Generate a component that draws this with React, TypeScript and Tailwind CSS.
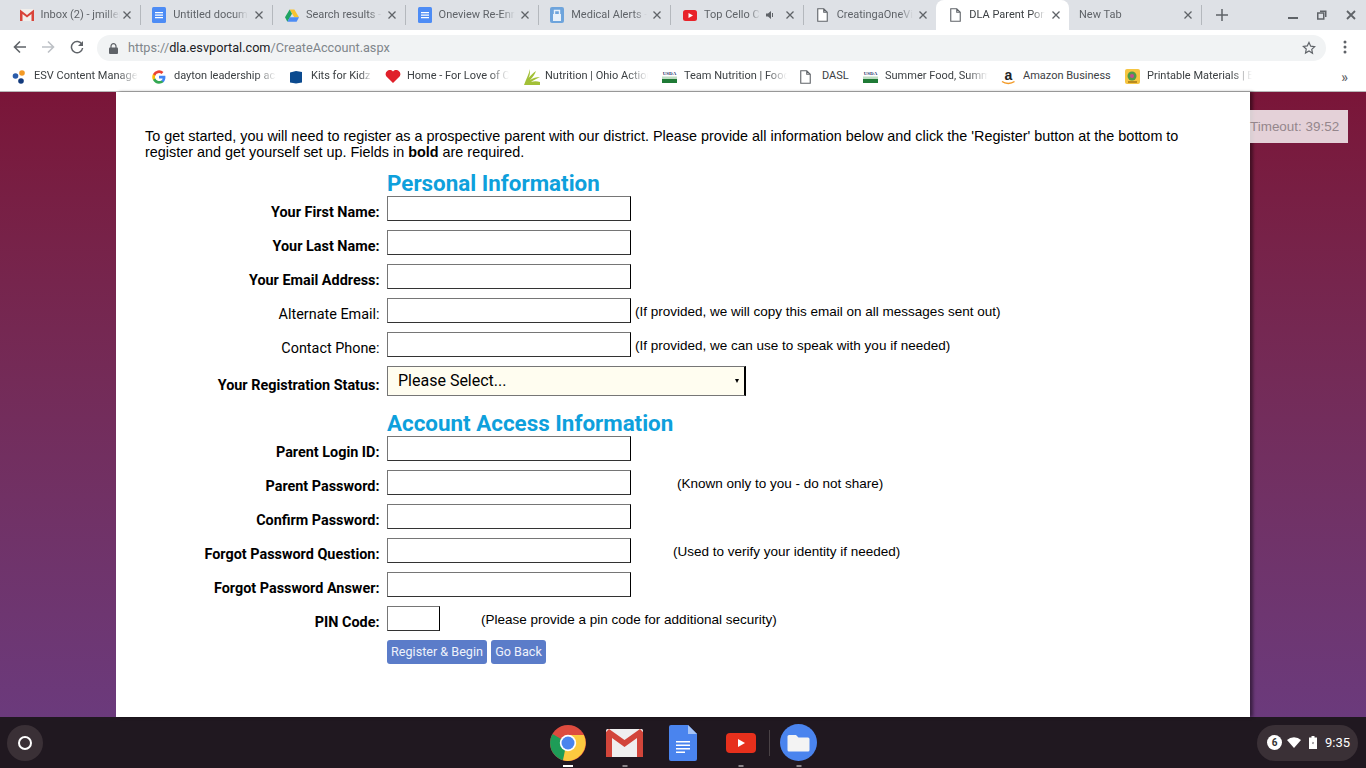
import React from "react";

const GmailTab = () => (
  <svg width="14" height="12" viewBox="0 0 14 12"><rect width="14" height="12" fill="#f1efec" /><path d="M0 .5 7 6l7-5.500V12h-2.500V5L7 8.500 2.500 5v7H0z" fill="#d9443a" /></svg>
);
const DocsIcon = () => (
  <svg width="14" height="16" viewBox="0 0 14 16"><rect width="14" height="16" rx="1.500" fill="#4d8cf5" /><path d="M3 5h8v1.300H3zM3 7.500h8v1.300H3zM3 10h8v1.300H3z" fill="#fff" /></svg>
);
const DriveIcon = () => (
  <svg width="14" height="13" viewBox="0 0 16 14"><path d="M5.300 0h5.400l5.300 9h-5.400z" fill="#f7c331" /><path d="M5.300 0 0 9l2.700 5L8 5z" fill="#1fa463" /><path d="M2.700 14h10.600L16 9H5.400z" fill="#4d8cf5" /></svg>
);
const BagIcon = () => (
  <svg width="14" height="16" viewBox="0 0 14 16"><rect width="14" height="16" rx="2" fill="#6ea4dc" /><path d="M3 7h8v7H3z" fill="#e8f1fa" /><path d="M4.500 7V3.500h5V7" fill="none" stroke="#e8f1fa" strokeWidth="1.400" /></svg>
);
const YtIcon = () => (
  <svg width="14" height="11" viewBox="0 0 14 11"><rect width="14" height="11" rx="2.500" fill="#e8232a" /><path d="M5.500 3v5L10 5.500z" fill="#fff" /></svg>
);
const PageIcon = ({ c = "#5f6368" }: { c?: string }) => (
  <svg width="11" height="14" viewBox="0 0 11 14"><path d="M.75.75h6l3.500 3.500v9H.75zM6.750.75v3.500h3.500" fill="#fff" stroke={c} strokeWidth="1.100" /></svg>
);
const Close = ({ c = "#5f6368" }: { c?: string }) => (
  <svg width="10" height="10" viewBox="0 0 10 10"><path d="M1.500 1.500l7 7M8.500 1.500l-7 7" stroke={c} strokeWidth="1.300" /></svg>
);

type Tab = { icon?: React.ReactNode; t: string; active?: boolean; sound?: boolean; w: number };
const tabs: Tab[] = [
  { icon: <GmailTab />, t: "Inbox (2) - jmiller", w: 79 },
  { icon: <DocsIcon />, t: "Untitled document", w: 75 },
  { icon: <DriveIcon />, t: "Search results - Google", w: 76 },
  { icon: <DocsIcon />, t: "Oneview Re-Enrollment", w: 76 },
  { icon: <BagIcon />, t: "Medical Alerts - Dayton", w: 76 },
  { icon: <YtIcon />, t: "Top Cello Covers", sound: true, w: 56 },
  { icon: <PageIcon />, t: "CreatingaOneView", w: 76 },
  { icon: <PageIcon />, t: "DLA Parent Portal", active: true, w: 76 },
  { t: "New Tab", w: 76 },
];

const UsdaIcon = () => (
  <svg width="15" height="13" viewBox="0 0 15 13">
    <text x="7.500" y="4.600" textAnchor="middle" fontSize="5" fontWeight="700" fontFamily="Liberation Serif" fill="#28336b">USDA</text>
    <rect y="6.500" width="15" height="2.500" fill="#bfdcc3" />
    <rect y="9" width="15" height="4" fill="#1f7a36" />
  </svg>
);
const bookmarks: { icon: React.ReactNode; t: string; w: number; tw: number; plain?: boolean }[] = [
  {
    icon: (
      <svg width="16" height="16" viewBox="0 0 16 16"><circle cx="3.500" cy="7" r="2.800" fill="#2a5caa" /><circle cx="9" cy="12" r="2.800" fill="#123a7c" /><circle cx="10" cy="4" r="2.800" fill="#f39a26" /></svg>
    ),
    t: "ESV Content Manager",
    w: 140,
    tw: 104,
  },
  {
    icon: (
      <svg width="14" height="14" viewBox="0 0 24 24"><path d="M23 12.300c0-.8-.1-1.600-.2-2.300H12v4.400h6.200a5.300 5.300 0 0 1-2.300 3.500v2.900h3.700c2.200-2 3.400-5 3.400-8.500z" fill="#4285f4" /><path d="M12 23.500c3.100 0 5.700-1 7.600-2.800l-3.700-2.900a7 7 0 0 1-10.400-3.600H1.700v3A11.500 11.500 0 0 0 12 23.500z" fill="#34a853" /><path d="M5.500 14.200a7 7 0 0 1 0-4.400v-3H1.700a11.500 11.500 0 0 0 0 10.400z" fill="#fbbc05" /><path d="M12 5.100c1.700 0 3.200.6 4.400 1.700l3.300-3.300A11.500 11.500 0 0 0 1.700 6.800l3.800 3A6.900 6.900 0 0 1 12 5.100z" fill="#ea4335" /></svg>
    ),
    t: "dayton leadership academy",
    w: 137,
    tw: 102,
  },
  {
    icon: (
      <svg width="14" height="14" viewBox="0 0 14 14"><path d="M1 2.500 7 1v12.500l-6-1zM7 1l6 1v10.500l-6 1z" fill="#0b4a8f" /></svg>
    ),
    t: "Kits for Kidz",
    w: 96,
    tw: 61,
  },
  {
    icon: (
      <svg width="16" height="13" viewBox="0 1 16 13"><path d="M8 14 1.200 7.200A4.200 4.200 0 0 1 8 2.400a4.200 4.200 0 0 1 6.800 4.800z" fill="#e0202a" /></svg>
    ),
    t: "Home - For Love of Children",
    w: 138,
    tw: 102,
  },
  {
    icon: (
      <svg width="17" height="16" viewBox="0 0 17 16"><path d="M1 16C3 10 6 5 7 0c0 4 0 6-1.500 9C8 6 10 4 13 2c-1 3-3 6-6 9 3-2 6-3 10-3-3 2-7 3-9 5 3-1 6-1 9 0v3z" fill="#a2c037" /></svg>
    ),
    t: "Nutrition | Ohio Action",
    w: 139,
    tw: 103,
  },
  { icon: <UsdaIcon />, t: "Team Nutrition | Food", w: 138, tw: 103 },
  { icon: <PageIcon />, t: "DASL", w: 63, tw: 30, plain: true },
  { icon: <UsdaIcon />, t: "Summer Food, Summer", w: 138, tw: 103 },
  {
    icon: (
      <svg width="15" height="16" viewBox="0 0 15 16"><text x="7.500" y="11" textAnchor="middle" fontSize="14" fontWeight="700" fontFamily="Liberation Sans" fill="#222">a</text><path d="M1 12.500c3.500 2.500 9 2.500 12.500 0" fill="none" stroke="#f39a26" strokeWidth="1.500" /></svg>
    ),
    t: "Amazon Business",
    w: 124,
    tw: 90,
    plain: true,
  },
  {
    icon: (
      <svg width="15" height="15" viewBox="0 0 15 15"><rect width="15" height="15" rx="2" fill="#f5c542" /><circle cx="7" cy="7" r="4.500" fill="#4d9a4a" /><circle cx="7" cy="7" r="2" fill="#c34a8e" /><rect x="3" y="12" width="9" height="2" fill="#b98a1e" /></svg>
    ),
    t: "Printable Materials | Educ",
    w: 200,
    tw: 105,
  },
];

const inputCls =
  "block h-[25px] w-[244px] border border-[#767676] border-r-black border-b-[#333] bg-white";

const Row = ({
  label,
  bold = true,
  note,
  noteLeft = 4,
  w,
}: {
  label: string;
  bold?: boolean;
  note?: string;
  noteLeft?: number;
  w?: boolean;
}) => (
  <div className="flex h-[34px] items-start">
    <div
      className={`w-[234.500px] pt-[8px] text-right text-[14.4px] leading-[17px] text-black ${bold ? "font-bold" : "font-normal"}`}
      style={{ fontFamily: "Roboto, sans-serif" }}
    >
      {label}
    </div>
    <div className="ml-[7.500px] flex">
      <input className={w ? "block h-[25px] w-[53px] border border-[#767676] border-r-black border-b-[#333] bg-white" : inputCls} />
      {note && (
        <span
          className="h-[25px] text-[13.5px] leading-[28px] text-black"
          style={{ marginLeft: noteLeft, fontFamily: '"Liberation Sans", sans-serif' }}
        >
          {note}
        </span>
      )}
    </div>
  </div>
);

const Heading = ({ children }: { children: React.ReactNode }) => (
  <div className="ml-[242px] text-[22.4px] font-bold leading-[26px] text-[#0ea0dc] font-['Roboto',sans-serif]">{children}</div>
);

export default function App() {
  return (
    <div className="flex h-[768px] w-[1366px] flex-col overflow-hidden bg-white font-['Roboto',sans-serif]">
      {/* tab strip */}
      <div className="flex h-[30px] shrink-0 items-stretch bg-[#dee1e6] pl-[7px]">
        {tabs.map((tab, i) => (
          <div
            key={i}
            className={`relative flex w-[132.7px] shrink-0 items-center text-[11px] ${tab.active ? "rounded-t-[8px] bg-white text-[#3c4043]" : "text-[#5f6368]"} ${tab.icon ? "pl-[11.500px]" : "pl-[10.500px]"}`}
          >
            {tab.icon && <span className="mr-[6px] flex w-[16px] shrink-0 items-center justify-center">{tab.icon}</span>}
            <span
              className="block overflow-hidden whitespace-nowrap [mask-image:linear-gradient(90deg,#000_82%,transparent)]"
              style={{ width: tab.w }}
            >
              {tab.t}
            </span>
            {tab.sound && (
              <svg className="absolute left-[96px] top-[10px]" width="9" height="10" viewBox="0 0 9 10"><path d="M0 3.500h2L5 1v8L2 6.500H0z" fill="#5f6368" /><path d="M6.500 3v4" stroke="#5f6368" /></svg>
            )}
            <span className="absolute right-[8px] top-[10px]"><Close /></span>
            {!tab.active && i !== 6 && <span className="absolute bottom-[5px] right-[-1px] top-[5px] w-px bg-[#b4b8bd]" />}
          </div>
        ))}
        <div className="ml-[15px] flex w-[14px] items-center">
          <svg width="12" height="12" viewBox="0 0 12 12"><path d="M6 0v12M0 6h12" stroke="#5f6368" strokeWidth="1.500" /></svg>
        </div>
        <div className="ml-auto flex items-center gap-[19px] pr-[10px]">
          <svg width="10" height="10" viewBox="0 0 10 10"><path d="M0 8h10" stroke="#5f6368" strokeWidth="2" /></svg>
          <svg width="10" height="10" viewBox="0 0 10 10"><path d="M3 .5h6.500V7H8V2H3z" fill="#5f6368" /><rect x=".75" y="3" width="6" height="6" fill="none" stroke="#5f6368" strokeWidth="1.500" /></svg>
          <svg width="10" height="10" viewBox="0 0 10 10"><path d="M1 1l8 8M9 1l-8 8" stroke="#5f6368" strokeWidth="1.800" /></svg>
        </div>
      </div>

      {/* toolbar */}
      <div className="flex h-[32px] shrink-0 items-center bg-white pl-[13px] pr-[19px] pt-[4px]">
        <svg className="-mt-[2px]" width="14" height="14" viewBox="0 0 14 14"><path d="M13 7H2M7 1.500 1.500 7 7 12.500" fill="none" stroke="#5f6368" strokeWidth="1.600" /></svg>
        <svg className="-mt-[2px] ml-[14px]" width="14" height="14" viewBox="0 0 14 14"><path d="M1 7h11M7 1.500 12.500 7 7 12.500" fill="none" stroke="#bdc1c6" strokeWidth="1.600" /></svg>
        <svg className="-mt-[2px] ml-[15px]" width="14" height="14" viewBox="0 0 14 14"><path d="M12 4.500A5.600 5.600 0 1 0 12.600 8" fill="none" stroke="#5f6368" strokeWidth="1.500" /><path d="M13 1v5H8z" fill="#5f6368" /></svg>
        <div className="ml-[13px] flex h-[26px] w-[1229px] items-center rounded-full bg-[#f1f3f4] pl-[12px] pr-[10px]">
          <svg width="9" height="11" viewBox="0 0 9 11"><path d="M2 5V3.200a2.500 2.500 0 0 1 5 0V5" fill="none" stroke="#5f6368" strokeWidth="1.200" /><rect y="4.500" width="9" height="6.500" rx="1" fill="#5f6368" /></svg>
          <span className="ml-[10px] text-[12.700px] text-[#80868b]">
            https://<span className="text-[#202124]">dla.esvportal.com</span>/CreateAccount.aspx
          </span>
          <svg className="ml-auto" width="14" height="14" viewBox="0 0 24 24"><path d="M12 2.500l2.900 6.300 6.800.8-5 4.700 1.300 6.800L12 17.200l-6 3.400 1.300-6.800-5-4.700 6.800-.8z" fill="none" stroke="#5f6368" strokeWidth="2" /></svg>
        </div>
        <svg className="-mt-[2px] ml-auto" width="4" height="14" viewBox="0 0 4 14"><circle cx="2" cy="2" r="1.500" fill="#5f6368" /><circle cx="2" cy="7" r="1.500" fill="#5f6368" /><circle cx="2" cy="12" r="1.500" fill="#5f6368" /></svg>
      </div>

      {/* bookmarks */}
      <div className="flex h-[30px] shrink-0 items-center border-b border-[#b8b8b8] bg-white pl-[12px] text-[11px] text-[#3c4043]">
        {bookmarks.map((b, i) => (
          <div key={i} className="flex shrink-0 items-center" style={{ width: b.w }}>
            <span className="flex w-[22px] shrink-0 items-center">{b.icon}</span>
            <span
              className={`block overflow-hidden whitespace-nowrap ${b.plain ? "" : "[mask-image:linear-gradient(90deg,#000_80%,transparent)]"}`}
              style={{ width: b.tw }}
            >
              {b.t}
            </span>
          </div>
        ))}
        <span className="ml-auto pr-[18px] text-[14px] font-medium leading-none text-[#5f6368]">»</span>
      </div>

      {/* page */}
      <div className="relative flex min-h-0 flex-1 justify-center bg-gradient-to-b from-[#7a1538] to-[#6b3a7c]">
        <div className="h-full w-[1134px] bg-white pl-[29px] pr-[60px] pt-[36px] shadow-[3px_0_3px_rgba(0,0,0,0.45)]">
          <p className="text-[14.400px] leading-[16px] text-black font-['Liberation_Sans',sans-serif]">
            To get started, you will need to register as a prospective parent with our district. Please provide all information below and click the 'Register' button at the bottom to register and get yourself set up. Fields in <b>bold</b> are required.
          </p>
          <div className="mt-[10px]">
            <Heading>Personal Information</Heading>
            <Row label="Your First Name:" />
            <Row label="Your Last Name:" />
            <Row label="Your Email Address:" />
            <Row label="Alternate Email:" bold={false} note="(If provided, we will copy this email on all messages sent out)" />
            <Row label="Contact Phone:" bold={false} note="(If provided, we can use to speak with you if needed)" />
            <div className="flex h-[30px] items-start">
              <div className="w-[234.500px] pt-[11px] text-right text-[14.400px] font-bold leading-[17px] text-black">Your Registration Status:</div>
              <div className="relative ml-[7.500px] flex h-[30px] w-[359px] items-center border border-[#767676] border-r-2 border-r-black bg-[#fffdf0] pl-[10px] text-[16px] text-black">
                Please Select...
                <span className="absolute right-[5px] top-[12px] h-0 w-0 border-x-[2.500px] border-t-[4px] border-x-transparent border-t-black" />
              </div>
            </div>
            <div className="mt-[14px]">
              <Heading>Account Access Information</Heading>
            </div>
            <Row label="Parent Login ID:" />
            <Row label="Parent Password:" note="(Known only to you - do not share)" noteLeft={46} />
            <Row label="Confirm Password:" />
            <Row label="Forgot Password Question:" note="(Used to verify your identity if needed)" noteLeft={42} />
            <Row label="Forgot Password Answer:" />
            <Row label="PIN Code:" w note="(Please provide a pin code for additional security)" noteLeft={41} />
            <div className="ml-[242px] flex gap-[4px]">
              <button className="h-[24px] w-[100px] rounded-[3px] bg-[#5b7cc9] text-[12.600px] text-[#eef2fb]">Register &amp; Begin</button>
              <button className="h-[24px] w-[55px] rounded-[3px] bg-[#5b7cc9] text-[12.600px] text-[#eef2fb]">Go Back</button>
            </div>
          </div>
        </div>
        <div className="absolute left-[1250px] top-[18px] flex h-[33px] w-[98px] items-center bg-white/80 pt-[2px] text-[13.440px] text-[#94868c]">
          <span className="font-['Liberation_Sans',sans-serif]">Timeout: 39:52</span>
        </div>
      </div>

      {/* shelf */}
      <div className="grid h-[51px] shrink-0 grid-cols-[1fr_auto_1fr] items-center bg-[#201820]">
        <div className="pl-[7px]">
          <div className="flex h-[36px] w-[36px] items-center justify-center rounded-full bg-[#3a3036]">
            <span className="h-[14px] w-[14px] rounded-full border-2 border-white" />
          </div>
        </div>
        <div className="flex items-center pl-[1px]">
          {[
            {
              dot: "w-[10px] bg-white",
              el: (
                <svg width="36" height="36" viewBox="0 0 36 36"><circle cx="18" cy="18" r="18" fill="#dd4b3e" /><path d="M18 18 2.500 9A18 18 0 0 0 13 35.300z" fill="#1e9c57" /><path d="M18 10h15.800A18 18 0 0 1 13 35.300z" fill="#fcca3f" /><circle cx="18" cy="18" r="8.200" fill="#fff" /><circle cx="18" cy="18" r="6.500" fill="#4a84ee" /></svg>
              ),
              w: "w-[36px]",
            },
            {
              dot: "w-[5px] bg-[#8a8488]",
              el: (
                <svg width="37" height="28" viewBox="0 0 37 28"><rect width="37" height="28" rx="1.500" fill="#efefef" /><path d="M0 3v25h6V9l12.500 9L31 9v19h6V3l-3-3-15.500 11L3 0z" fill="#d2453a" /></svg>
              ),
              w: "ml-[20px] w-[37px]",
            },
            {
              dot: "hidden",
              el: (
                <svg width="28" height="36" viewBox="0 0 28 36"><path d="M2 0h17l9 9v25a2 2 0 0 1-2 2H2a2 2 0 0 1-2-2V2a2 2 0 0 1 2-2z" fill="#4a84ee" /><path d="M19 0l9 9h-9z" fill="#a6c5f8" /><path d="M7 16h14v1.500H7zM7 19.500h14V21H7zM7 23h14v1.500H7zM7 26.500h9V28H7z" fill="#fff" /></svg>
              ),
              w: "ml-[26px] w-[28px]",
            },
            {
              dot: "w-[5px] bg-[#8a8488]",
              el: (
                <svg width="30" height="20" viewBox="0 0 30 20"><rect width="30" height="20" rx="4" fill="#e7301c" /><path d="M12 6v8l7-4z" fill="#fff" /></svg>
              ),
              w: "ml-[29px] w-[30px]",
            },
          ].map((x, i) => (
            <div key={i} className={`relative flex h-[51px] items-center justify-center ${x.w}`}>
              {x.el}
              <span className={`absolute bottom-[1px] left-1/2 h-[2px] -translate-x-1/2 ${x.dot}`} />
            </div>
          ))}
          <span className="ml-[13px] h-[26px] w-px bg-[#4a4246]" />
          <div className="relative ml-[10px] flex h-[51px] w-[37px] items-center justify-center">
            <svg width="37" height="37" viewBox="0 0 37 37"><circle cx="18.500" cy="18.500" r="18.500" fill="#4a84ee" /><path d="M9 11h7l2.500 2.500H28a1.500 1.500 0 0 1 1.500 1.500v11a1.500 1.500 0 0 1-1.500 1.500H9A1.500 1.500 0 0 1 7.500 26V12.500A1.500 1.500 0 0 1 9 11z" fill="#f3f3f3" /></svg>
            <span className="absolute bottom-[1px] left-1/2 h-[2px] w-[5px] -translate-x-1/2 bg-[#8a8488]" />
          </div>
        </div>
        <div className="flex justify-end pr-[8px]">
          <div className="flex h-[36px] w-[101px] items-center rounded-full bg-[#3a3036] pl-[10px] text-[13px] text-white">
            <span className="flex h-[15px] w-[15px] items-center justify-center rounded-full bg-white text-[10px] font-bold leading-none text-[#333]">6</span>
            <svg className="ml-[5px]" width="14" height="11" viewBox="0 0 14 11"><path d="M7 11 0 3a10 10 0 0 1 14 0z" fill="#fff" /></svg>
            <svg className="ml-[8px]" width="8" height="13" viewBox="0 0 8 13"><path d="M2.500 0h3v1.500H8V13H0V1.500h2.500z" fill="#fff" /><path d="M4.500 4 3 7.500h1.500L3.500 10 5 6.500H3.500z" fill="#3a3036" /></svg>
            <span className="ml-[8px]">9:35</span>
          </div>
        </div>
      </div>
    </div>
  );
}
